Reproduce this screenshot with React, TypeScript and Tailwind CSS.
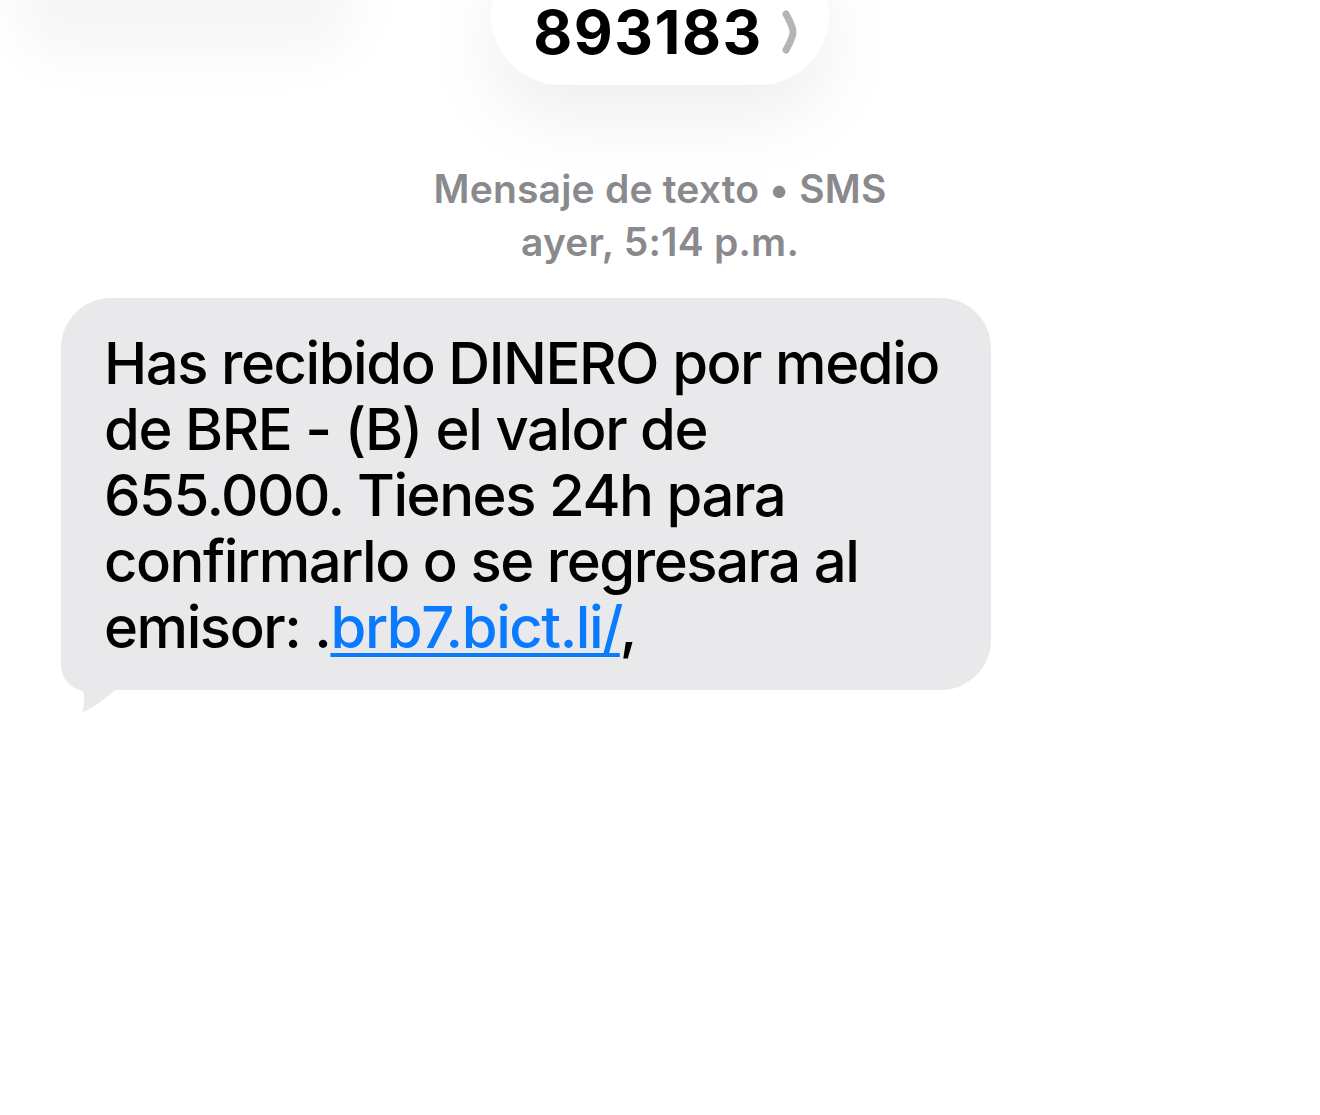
import React from 'react';

const font = { fontFamily: 'Inter, "Noto Sans", sans-serif' };

function Chevron() {
  return (
    <svg width="18" height="44" viewBox="0 0 18 44" fill="none">
      <path d="M5 4 C10 13, 12 19, 12 22 C12 25, 10 31, 5 40" stroke="#b5b5b5" strokeWidth="7" strokeLinecap="round" />
    </svg>
  );
}

function Tail() {
  return (
    <svg
      className="absolute left-0 top-[342px]"
      width="60"
      height="76"
      viewBox="0 0 60 76"
    >
      <path
        d="M0 0 L0 23 C0 38 8 48 22 51 C24 60 23 66 21 72 C32 69 42 60 54 50 L54 0 Z"
        fill="#e9e9eb"
      />
    </svg>
  );
}

export default function App() {
  return (
    <div className="relative w-[1320px] h-[1115px] overflow-hidden bg-white" style={font}>
      {/* blurred back button behind header */}
      <div className="absolute left-[10px] top-[-60px] w-[350px] h-[120px] rounded-full bg-black/[0.03] blur-[22px]" />

      {/* sender pill */}
      <div className="flex justify-center">
        <div className="relative -mt-[55px] h-[140px] w-[338px] rounded-full bg-white shadow-[0_30px_80px_rgba(0,0,0,0.07)] flex justify-center pt-[57px]">
          <div className="relative flex items-center gap-[18px] h-[60px] ml-[12px]">
            <span className="text-[60px] leading-[60px] font-bold text-black tracking-[1.5px]">893183</span>
            <Chevron />
          </div>
        </div>
      </div>

      {/* conversation meta */}
      <div className="mt-[77px] flex flex-col items-center text-[#8a8a8e] font-semibold text-[39px] leading-[53px] tracking-[0.2px]">
        <span>Mensaje de texto • SMS</span>
        <span>ayer, 5:14 p.m.</span>
      </div>

      {/* received bubble */}
      <div className="relative mt-[30px] ml-[61px] w-[930px]">
        <Tail />
        <div className="relative rounded-[50px] bg-[#e9e9eb] pt-[32px] pb-[30px] pl-[43px] pr-[48px] text-[58px] leading-[66px] font-medium text-black tracking-[-1.45px]">
          Has recibido DINERO por medio de BRE - (B) el valor de 655.000. Tienes 24h para confirmarlo o se regresara al emisor: .
          <span className="text-[#0a7bff] underline decoration-[4px] underline-offset-[5px]">brb7.bict.li/</span>,
        </div>
      </div>
    </div>
  );
}
